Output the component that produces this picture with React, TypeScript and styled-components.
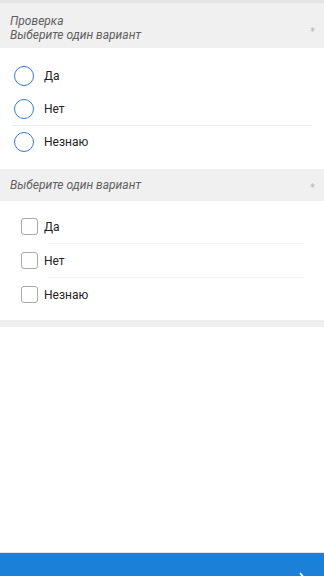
import React from "react";
import styled, { createGlobalStyle } from "styled-components";

const Global = createGlobalStyle`
  html, body { margin: 0; padding: 0; background: #ffffff; }
  body { font-family: Roboto, "Noto Sans", sans-serif; }
  #root { min-height: 576px; }
`;

const Page = styled.div`
  height: 576px;
  display: flex;
  flex-direction: column;
  background: #fff;
  overflow: hidden;
`;

const TopStrip = styled.div`
  height: 3px;
  background: #e4e4e4;
`;

const Header = styled.div<{ $padTop: number; $padBottom: number }>`
  background: #f0f0f0;
  display: flex;
  align-items: flex-start;
  padding: ${(p) => p.$padTop}px 9px ${(p) => p.$padBottom}px 10px;
`;

const HeaderText = styled.div`
  flex: 1;
  font-style: italic;
  font-size: 12px;
  line-height: 14px;
  color: #5f5f5f;
`;

const Star = styled.span<{ $top: number }>`
  font-family: "DejaVu Sans", sans-serif;
  font-size: 10px;
  line-height: 10px;
  height: 0;
  overflow: visible;
  color: #b4b4b4;
  margin-top: ${(p) => p.$top}px;
`;

const Options = styled.div<{ $padTop: number }>`
  display: flex;
  flex-direction: column;
  padding-top: ${(p) => p.$padTop}px;
`;

const Row = styled.div<{ $h: number }>`
  height: ${(p) => p.$h}px;
  display: flex;
  align-items: center;
`;

const Line = styled.div<{ $left: number; $right: number; $color: string }>`
  height: 1px;
  margin: 0 ${(p) => p.$right}px 0 ${(p) => p.$left}px;
  background: ${(p) => p.$color};
`;

const RadioCircle = styled.span`
  box-sizing: border-box;
  width: 20px;
  height: 20px;
  border-radius: 50%;
  border: 1.8px solid #3d7acb;
  margin-left: 14px;
  margin-right: 10px;
`;

const CheckBox = styled.span`
  box-sizing: border-box;
  width: 17px;
  height: 17px;
  border-radius: 3px;
  border: 1.3px solid #a9a9a9;
  margin-left: 21px;
  margin-right: 6px;
`;

const Label = styled.span`
  font-size: 12px;
  color: #222222;
`;

const Divider = styled.div`
  height: 7px;
  background: #efefef;
  margin-top: 9px;
`;

const Spacer = styled.div`
  flex: 1;
`;

const BottomBar = styled.div`
  height: 23px;
  background: #1a80d8;
  border-top: 1px solid #d6e7f6;
  position: relative;
  flex-shrink: 0;
  overflow: hidden;
`;

const ChevronIcon = styled.svg`
  position: absolute;
  right: 16px;
  top: 19px;
`;

const Gap = styled.div<{ $h: number }>`
  height: ${(p) => p.$h}px;
`;

const options = ["Да", "Нет", "Незнаю"];

export default function App() {
  return (
    <>
      <Global />
      <Page>
        <TopStrip />
        <Header $padTop={11} $padBottom={6}>
          <HeaderText>
            Проверка
            <br />
            Выберите один вариант
          </HeaderText>
          <Star $top={13}>*</Star>
        </Header>
        <Options $padTop={11}>
          <Row $h={33}>
            <RadioCircle />
            <Label>{options[0]}</Label>
          </Row>
          <Row $h={33}>
            <RadioCircle />
            <Label>{options[1]}</Label>
          </Row>
          <Line $left={12} $right={12} $color="#ececec" />
          <Row $h={32}>
            <RadioCircle />
            <Label>{options[2]}</Label>
          </Row>
        </Options>
        <Gap $h={11} />
        <Header $padTop={9} $padBottom={9}>
          <HeaderText>Выберите один вариант</HeaderText>
          <Star $top={5}>*</Star>
        </Header>
        <Options $padTop={9}>
          <Row $h={33}>
            <CheckBox />
            <Label>{options[0]}</Label>
          </Row>
          <Line $left={48} $right={20} $color="#f6f6f6" />
          <Row $h={33}>
            <CheckBox />
            <Label>{options[1]}</Label>
          </Row>
          <Line $left={48} $right={20} $color="#f6f6f6" />
          <Row $h={33}>
            <CheckBox />
            <Label>{options[2]}</Label>
          </Row>
        </Options>
        <Divider />
        <Spacer />
        <BottomBar>
          <ChevronIcon width="10" height="16" viewBox="0 0 10 16">
            <path d="M2 1 L8 8 L2 15" fill="none" stroke="#ffffff" strokeWidth="1.8" />
          </ChevronIcon>
        </BottomBar>
      </Page>
    </>
  );
}
